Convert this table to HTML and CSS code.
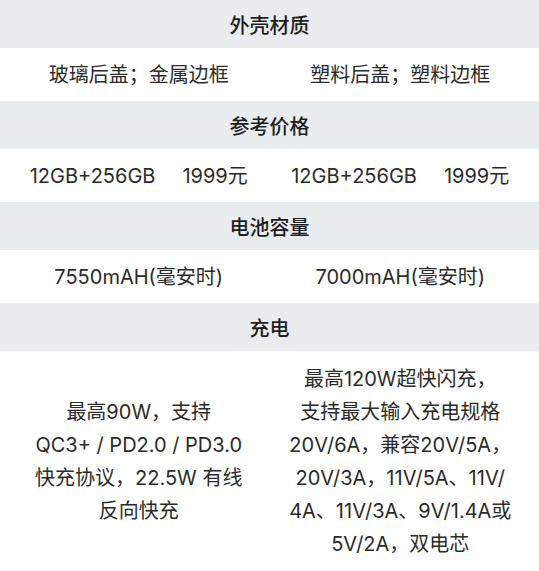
FILE: index.html
```html
<!DOCTYPE html>
<html lang="zh-CN">
<head>
<meta charset="utf-8">
<title>参数对比</title>
<link rel="stylesheet" href="styles.css">
</head>
<body>
<div class="spec">
  <div class="head">外壳材质</div>
  <div class="row">
    <div class="cell">玻璃后盖；金属边框</div>
    <div class="cell">塑料后盖；塑料边框</div>
  </div>
  <div class="head">参考价格</div>
  <div class="row">
    <div class="cell"><span class="gap">12GB+256GB</span>1999元</div>
    <div class="cell"><span class="gap">12GB+256GB</span>1999元</div>
  </div>
  <div class="head">电池容量</div>
  <div class="row">
    <div class="cell">7550mAH(毫安时)</div>
    <div class="cell">7000mAH(毫安时)</div>
  </div>
  <div class="head">充电</div>
  <div class="row tall">
    <div class="cell multi">最高90W，支持<br>QC3+ / PD2.0 / PD3.0<br>快充协议，22.5W 有线<br>反向快充</div>
    <div class="cell multi">最高120W超快闪充，<br>支持最大输入充电规格<br>20V/6A，兼容20V/5A，<br>20V/3A，11V/5A、11V/<br>4A、11V/3A、9V/1.4A或<br>5V/2A，双电芯</div>
  </div>
</div>
</body>
</html>
```

FILE: styles.css
```css
html, body {
  margin: 0;
  padding: 0;
  background: #ffffff;
}
body {
  font-family: Inter, "Noto Sans CJK SC", sans-serif;
  color: #2b2b2b;
}
.spec {
  display: flex;
  flex-direction: column;
}
.head {
  height: 48px;
  background: #eaedf0;
  display: flex;
  align-items: center;
  justify-content: center;
  font-size: 20px;
  font-weight: 500;
  color: #1e1e1e;
}
.row {
  display: grid;
  grid-template-columns: 1fr 1fr;
  min-height: 53px;
  padding: 0 8px;
  align-items: center;
}
.cell {
  text-align: center;
  font-size: 20px;
  line-height: 28px;
}
.gap {
  margin-right: 27px;
}
.tall {
  padding: 12px 8px;
}
.multi {
  line-height: 33px;
}
```
